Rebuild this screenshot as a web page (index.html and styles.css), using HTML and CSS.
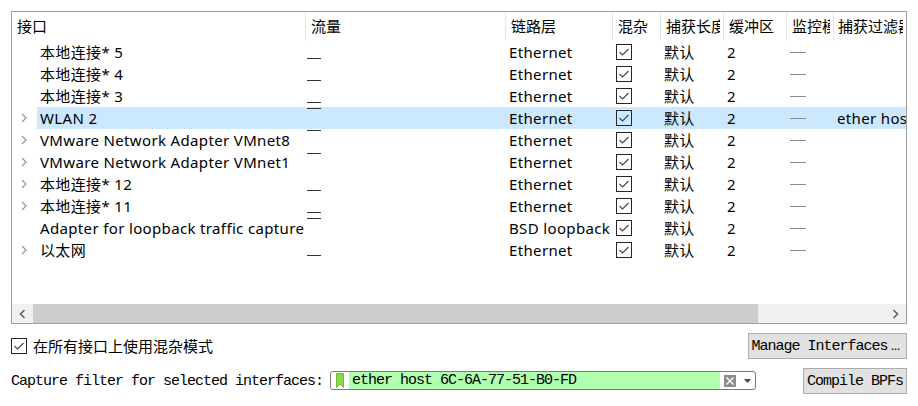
FILE: index.html
```html
<!DOCTYPE html>
<html>
<head>
<meta charset="utf-8">
<link rel="stylesheet" href="styles.css">
</head>
<body>
<div class="dialog">
  <div class="tree">
    <div class="header">
      <div class="hcell"><span>接口</span></div>
      <div class="hcell"><span>流量</span></div>
      <div class="hcell"><span>链路层</span></div>
      <div class="hcell"><span>混杂</span></div>
      <div class="hcell"><span>捕获长度</span></div>
      <div class="hcell"><span>缓冲区（MB）</span></div>
      <div class="hcell"><span>监控模式</span></div>
      <div class="hcell last"><span>捕获过滤器</span></div>
    </div>
    <div class="rows">
      <div class="row">
        <div class="branch"></div>
        <div class="cells">
          <div class="cell">本地连接* 5</div>
          <div class="cell traffic"><span class="spark" style="margin-top:17px"></span></div>
          <div class="cell">Ethernet</div>
          <div class="cell chk"><svg width="16" height="16" viewBox="0 0 16 16"><rect x="0.5" y="0.5" width="15" height="15" fill="none" stroke="#262626"/><path d="M3.5 8 L6.5 11 L12.5 5" fill="none" stroke="#444" stroke-width="1.1"/></svg></div>
          <div class="cell">默认</div>
          <div class="cell">2</div>
          <div class="cell mon"><span class="dash"></span></div>
          <div class="cell"></div>
        </div>
      </div>
      <div class="row">
        <div class="branch"></div>
        <div class="cells">
          <div class="cell">本地连接* 4</div>
          <div class="cell traffic"><span class="spark" style="margin-top:17px"></span></div>
          <div class="cell">Ethernet</div>
          <div class="cell chk"><svg width="16" height="16" viewBox="0 0 16 16"><rect x="0.5" y="0.5" width="15" height="15" fill="none" stroke="#262626"/><path d="M3.5 8 L6.5 11 L12.5 5" fill="none" stroke="#444" stroke-width="1.1"/></svg></div>
          <div class="cell">默认</div>
          <div class="cell">2</div>
          <div class="cell mon"><span class="dash"></span></div>
          <div class="cell"></div>
        </div>
      </div>
      <div class="row">
        <div class="branch"></div>
        <div class="cells">
          <div class="cell">本地连接* 3</div>
          <div class="cell traffic"><span class="spark" style="margin-top:17px"></span></div>
          <div class="cell">Ethernet</div>
          <div class="cell chk"><svg width="16" height="16" viewBox="0 0 16 16"><rect x="0.5" y="0.5" width="15" height="15" fill="none" stroke="#262626"/><path d="M3.5 8 L6.5 11 L12.5 5" fill="none" stroke="#444" stroke-width="1.1"/></svg></div>
          <div class="cell">默认</div>
          <div class="cell">2</div>
          <div class="cell mon"><span class="dash"></span></div>
          <div class="cell"></div>
        </div>
      </div>
      <div class="row sel">
        <div class="branch"><svg class="arrow" width="6" height="10" viewBox="0 0 6 10"><path d="M1 1 L5 5 L1 9" fill="none" stroke="#9a9a9a" stroke-width="1.3"/></svg></div>
        <div class="cells">
          <div class="cell">WLAN 2</div>
          <div class="cell traffic"><span class="spark" style="margin-top:1px"></span></div>
          <div class="cell">Ethernet</div>
          <div class="cell chk"><svg width="16" height="16" viewBox="0 0 16 16"><rect x="0.5" y="0.5" width="15" height="15" fill="none" stroke="#262626"/><path d="M3.5 8 L6.5 11 L12.5 5" fill="none" stroke="#444" stroke-width="1.1"/></svg></div>
          <div class="cell">默认</div>
          <div class="cell">2</div>
          <div class="cell mon"><span class="dash"></span></div>
          <div class="cell">ether host 6C-6A-77-51-B0-FD</div>
        </div>
      </div>
      <div class="row">
        <div class="branch"><svg class="arrow" width="6" height="10" viewBox="0 0 6 10"><path d="M1 1 L5 5 L1 9" fill="none" stroke="#9a9a9a" stroke-width="1.3"/></svg></div>
        <div class="cells">
          <div class="cell">VMware Network Adapter VMnet8</div>
          <div class="cell traffic"><span class="spark" style="margin-top:1px"></span></div>
          <div class="cell">Ethernet</div>
          <div class="cell chk"><svg width="16" height="16" viewBox="0 0 16 16"><rect x="0.5" y="0.5" width="15" height="15" fill="none" stroke="#262626"/><path d="M3.5 8 L6.5 11 L12.5 5" fill="none" stroke="#444" stroke-width="1.1"/></svg></div>
          <div class="cell">默认</div>
          <div class="cell">2</div>
          <div class="cell mon"><span class="dash"></span></div>
          <div class="cell"></div>
        </div>
      </div>
      <div class="row">
        <div class="branch"><svg class="arrow" width="6" height="10" viewBox="0 0 6 10"><path d="M1 1 L5 5 L1 9" fill="none" stroke="#9a9a9a" stroke-width="1.3"/></svg></div>
        <div class="cells">
          <div class="cell">VMware Network Adapter VMnet1</div>
          <div class="cell traffic"><span class="spark" style="margin-top:2px"></span></div>
          <div class="cell">Ethernet</div>
          <div class="cell chk"><svg width="16" height="16" viewBox="0 0 16 16"><rect x="0.5" y="0.5" width="15" height="15" fill="none" stroke="#262626"/><path d="M3.5 8 L6.5 11 L12.5 5" fill="none" stroke="#444" stroke-width="1.1"/></svg></div>
          <div class="cell">默认</div>
          <div class="cell">2</div>
          <div class="cell mon"><span class="dash"></span></div>
          <div class="cell"></div>
        </div>
      </div>
      <div class="row">
        <div class="branch"><svg class="arrow" width="6" height="10" viewBox="0 0 6 10"><path d="M1 1 L5 5 L1 9" fill="none" stroke="#9a9a9a" stroke-width="1.3"/></svg></div>
        <div class="cells">
          <div class="cell">本地连接* 12</div>
          <div class="cell traffic"><span class="spark" style="margin-top:17px"></span></div>
          <div class="cell">Ethernet</div>
          <div class="cell chk"><svg width="16" height="16" viewBox="0 0 16 16"><rect x="0.5" y="0.5" width="15" height="15" fill="none" stroke="#262626"/><path d="M3.5 8 L6.5 11 L12.5 5" fill="none" stroke="#444" stroke-width="1.1"/></svg></div>
          <div class="cell">默认</div>
          <div class="cell">2</div>
          <div class="cell mon"><span class="dash"></span></div>
          <div class="cell"></div>
        </div>
      </div>
      <div class="row">
        <div class="branch"><svg class="arrow" width="6" height="10" viewBox="0 0 6 10"><path d="M1 1 L5 5 L1 9" fill="none" stroke="#9a9a9a" stroke-width="1.3"/></svg></div>
        <div class="cells">
          <div class="cell">本地连接* 11</div>
          <div class="cell traffic"><span class="spark" style="margin-top:17px"></span></div>
          <div class="cell">Ethernet</div>
          <div class="cell chk"><svg width="16" height="16" viewBox="0 0 16 16"><rect x="0.5" y="0.5" width="15" height="15" fill="none" stroke="#262626"/><path d="M3.5 8 L6.5 11 L12.5 5" fill="none" stroke="#444" stroke-width="1.1"/></svg></div>
          <div class="cell">默认</div>
          <div class="cell">2</div>
          <div class="cell mon"><span class="dash"></span></div>
          <div class="cell"></div>
        </div>
      </div>
      <div class="row">
        <div class="branch"></div>
        <div class="cells">
          <div class="cell">Adapter for loopback traffic capture</div>
          <div class="cell traffic"><span class="spark" style="margin-top:1px"></span></div>
          <div class="cell">BSD loopback</div>
          <div class="cell chk"><svg width="16" height="16" viewBox="0 0 16 16"><rect x="0.5" y="0.5" width="15" height="15" fill="none" stroke="#262626"/><path d="M3.5 8 L6.5 11 L12.5 5" fill="none" stroke="#444" stroke-width="1.1"/></svg></div>
          <div class="cell">默认</div>
          <div class="cell">2</div>
          <div class="cell mon"><span class="dash"></span></div>
          <div class="cell"></div>
        </div>
      </div>
      <div class="row">
        <div class="branch"><svg class="arrow" width="6" height="10" viewBox="0 0 6 10"><path d="M1 1 L5 5 L1 9" fill="none" stroke="#9a9a9a" stroke-width="1.3"/></svg></div>
        <div class="cells">
          <div class="cell">以太网</div>
          <div class="cell traffic"><span class="spark" style="margin-top:16px"></span></div>
          <div class="cell">Ethernet</div>
          <div class="cell chk"><svg width="16" height="16" viewBox="0 0 16 16"><rect x="0.5" y="0.5" width="15" height="15" fill="none" stroke="#262626"/><path d="M3.5 8 L6.5 11 L12.5 5" fill="none" stroke="#444" stroke-width="1.1"/></svg></div>
          <div class="cell">默认</div>
          <div class="cell">2</div>
          <div class="cell mon"><span class="dash"></span></div>
          <div class="cell"></div>
        </div>
      </div>
    </div>
    <div class="spacer"></div>
    <div class="hscroll">
      <div class="sbtn"><svg width="7" height="10" viewBox="0 0 7 10"><path d="M5.5 1 L1.5 5 L5.5 9" fill="none" stroke="#606060" stroke-width="1.6"/></svg></div>
      <div class="thumb"></div>
      <div class="track"></div>
      <div class="sbtn"><svg width="7" height="10" viewBox="0 0 7 10"><path d="M1.5 1 L5.5 5 L1.5 9" fill="none" stroke="#606060" stroke-width="1.6"/></svg></div>
    </div>
  </div>

  <div class="opts">
    <label class="promisc">
      <svg width="16" height="16" viewBox="0 0 16 16"><rect x="0.5" y="0.5" width="15" height="15" fill="#fff" stroke="#262626"/><path d="M3.5 8 L6.5 11 L12.5 5" fill="none" stroke="#444" stroke-width="1.1"/></svg>
      <span>在所有接口上使用混杂模式</span>
    </label>
    <div class="btn manage">Manage Interfaces<span class="ell">…</span></div>
  </div>

  <div class="filterrow">
    <span class="mono flabel">Capture filter for selected interfaces:</span>
    <div class="combo">
      <div class="bm"><svg width="8" height="15" viewBox="0 0 8 15"><path d="M0.5 0.5 H7.5 V14.5 L4 11 L0.5 14.5 Z" fill="#86dc46" stroke="#6cc030"/></svg></div>
      <div class="ftext mono">ether host 6C-6A-77-51-B0-FD</div>
      <div class="tail">
        <svg width="12" height="12" viewBox="0 0 12 12"><rect x="0" y="0" width="12" height="12" fill="#8c8c8c"/><path d="M2.5 2.5 L9.5 9.5 M9.5 2.5 L2.5 9.5" stroke="#fff" stroke-width="1.4"/></svg>
        <svg class="drop" width="7" height="4" viewBox="0 0 7 4"><path d="M0 0 H7 L3.5 4 Z" fill="#444"/></svg>
      </div>
    </div>
    <div class="btn compile">Compile BPFs</div>
  </div>
</div>
</body>
</html>
```

FILE: styles.css
```css
* { box-sizing: border-box; }
html, body { margin: 0; padding: 0; background: #fff; }
body {
  width: 918px;
  height: 406px;
  overflow: hidden;
  font-family: "Noto Sans", "Noto Sans CJK SC", sans-serif;
  font-size: 15px;
  color: #000;
}
.dialog { padding: 11px 11px 0 11px; }

.tree {
  border: 1px solid #a0a0a0;
  height: 313px;
  display: flex;
  flex-direction: column;
  overflow: hidden;
}
.header {
  display: grid;
  grid-template-columns: 294px 200px 107px 48px 63px 63px 47px 1fr;
  height: 29px;
  flex: none;
}
.hcell {
  border-right: 1px solid #e5e5e5;
  padding: 0 3px 0 5px;
  line-height: 29px;
  white-space: nowrap;
  overflow: hidden;
}
.hcell span { display: block; overflow: hidden; }
.hcell.last { border-right: 0; padding-left: 4px; }

.rows { flex: none; }
.row { display: flex; height: 22px; }
.branch {
  width: 25px;
  flex: none;
  display: flex;
  align-items: center;
  padding-left: 9px;
}
.cells {
  flex: 1;
  min-width: 0;
  display: grid;
  grid-template-columns: 269px 200px 107px 48px 63px 63px 47px 1fr;
}
.row.sel .cells { background: #cce8ff; }
.cell {
  padding-left: 3px;
  line-height: 22px;
  height: 22px;
  white-space: nowrap;
  overflow: hidden;
  letter-spacing: 0.35px;
}
.cell.traffic { padding-left: 1px; }
.spark { display: block; width: 14px; height: 1px; background: #333; }
.cell.chk { display: flex; align-items: center; }
.cell.chk svg { display: block; }
.cell.mon { display: flex; align-items: center; }
.dash { display: block; width: 16px; height: 1px; background: #8a8a8a; margin-top: 1px; }

.spacer { flex: 1; }
.hscroll { flex: none; height: 19px; display: flex; background: #f0f0f0; }
.sbtn { width: 21px; display: flex; align-items: center; justify-content: center; }
.thumb { width: 725px; background: #cdcdcd; }
.track { flex: 1; }

.opts {
  margin-top: 9px;
  height: 26px;
  display: flex;
  align-items: center;
  justify-content: space-between;
}
.promisc { display: flex; align-items: center; gap: 6px; line-height: 20px; }
.promisc svg { display: block; }

.mono {
  font-family: "Liberation Mono", monospace;
  font-size: 15px;
  letter-spacing: -1px;
}
.btn {
  height: 26px;
  background: #e1e1e1;
  border: 1px solid #adadad;
  display: flex;
  align-items: center;
  justify-content: center;
  font-family: "Liberation Mono", monospace;
  font-size: 15px;
  letter-spacing: -1px;
  white-space: nowrap;
}
.ell {
  display: inline-block;
  width: 16px;
  text-align: center;
  letter-spacing: 0;
  vertical-align: 4px;
}
.manage { width: 159px; }
.compile { width: 104px; margin-left: auto; }

.filterrow {
  margin-top: 9px;
  height: 26px;
  display: flex;
  align-items: center;
}
.flabel { white-space: nowrap; }
.combo {
  margin-left: 7px;
  width: 426px;
  height: 19px;
  border: 1px solid #7a7a7a;
  border-radius: 3px;
  display: flex;
  overflow: hidden;
  margin-top: -1px;
}
.bm { width: 18px; flex: none; display: flex; align-items: center; justify-content: center; }
.bm svg { display: block; }
.ftext {
  flex: 1;
  background: #afffaf;
  padding-left: 3px;
  line-height: 17px;
  white-space: nowrap;
}
.tail {
  width: 35px;
  flex: none;
  display: flex;
  align-items: center;
  padding-left: 4px;
  gap: 8px;
}
.tail svg { display: block; }
```
